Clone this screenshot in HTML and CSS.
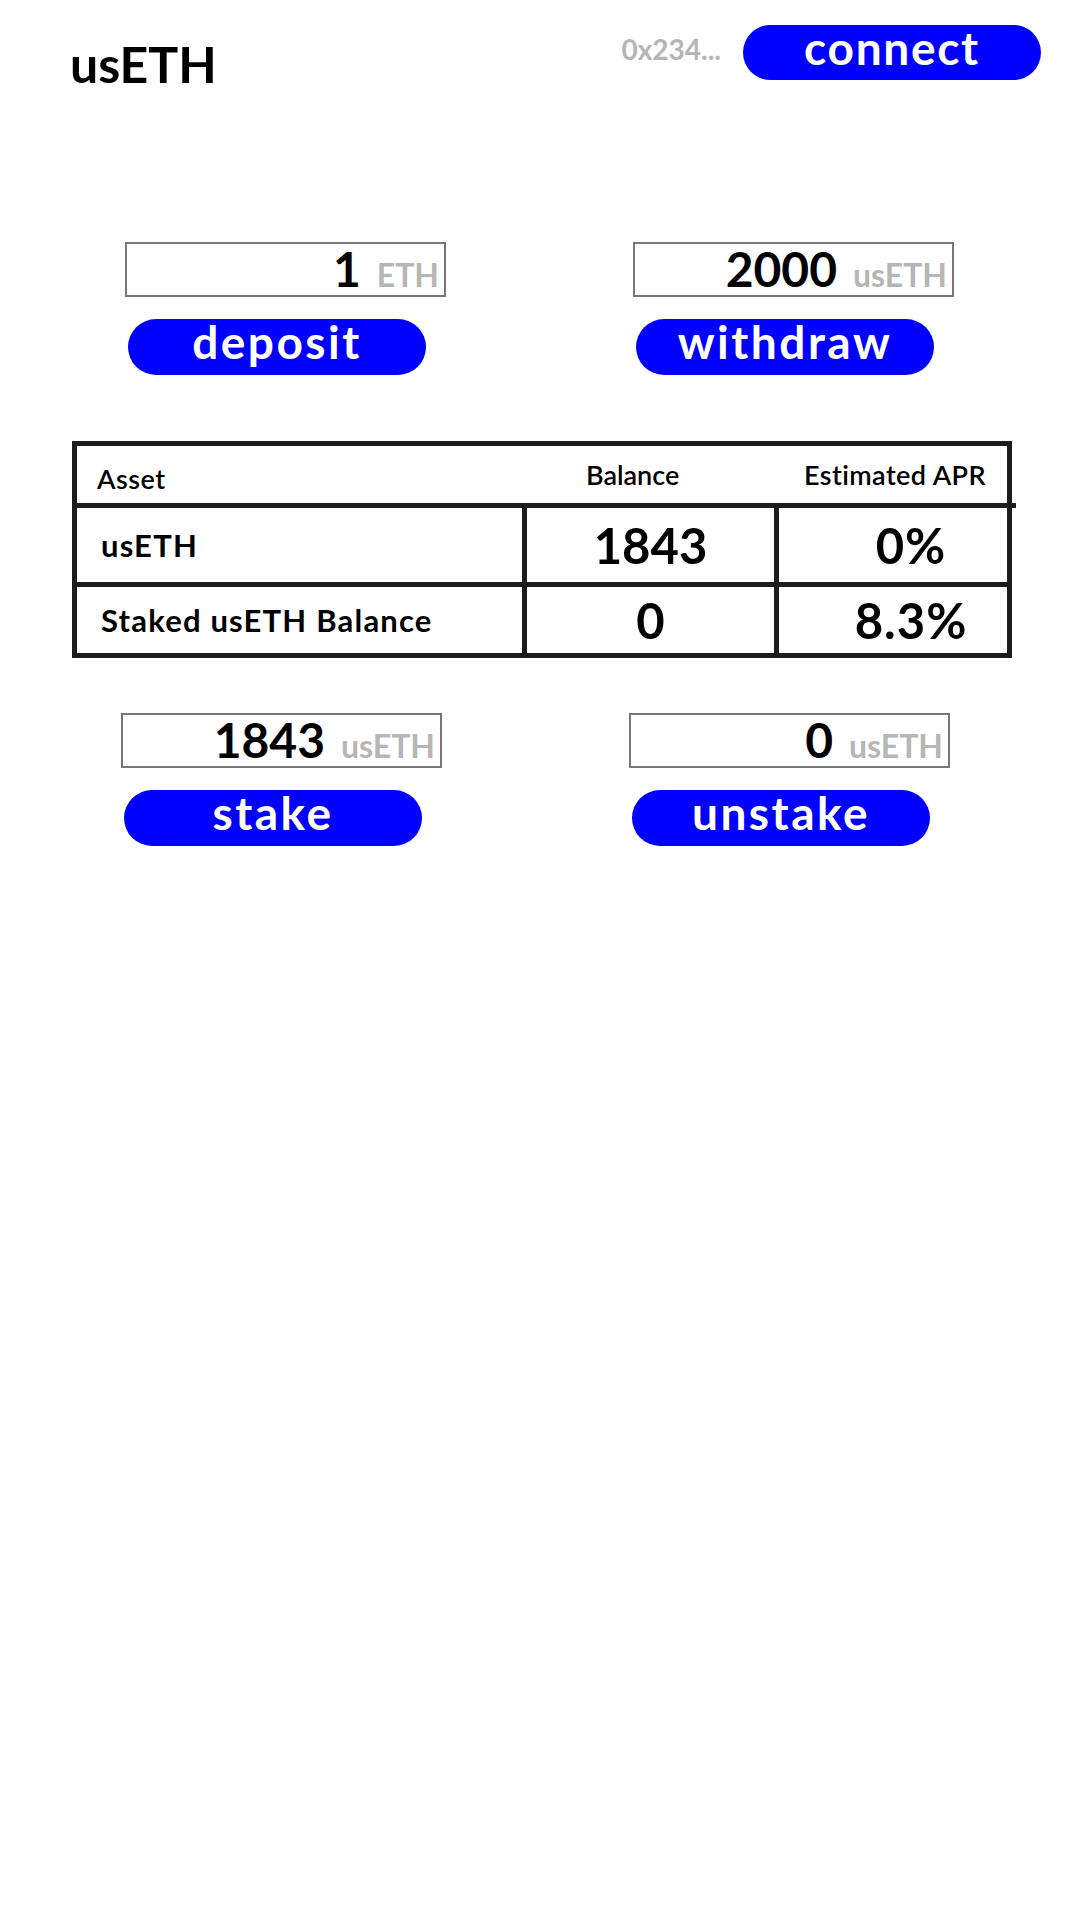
FILE: index.html
```html
<!DOCTYPE html>
<html lang="en">
<head>
    <meta charset="UTF-8">
    <meta name="viewport" content="width=device-width, initial-scale=1.0">
    <title>usETH</title>
    <link rel="stylesheet" href="styles.css">
</head>
<body>
    <div class="app">
        <div class="app-header">
            <h1 class="app-title">usETH</h1>
            <div class="wallet">
                <span class="wallet-address">0x234...</span>
                <button class="connect-button">connect</button>
            </div>
        </div>

        <div class="actions">
            <div class="action">
                <label class="amount">
                    <input type="text" class="amount-input" value="1">
                    <span class="amount-unit">ETH</span>
                </label>
                <button class="action-button">deposit</button>
            </div>
            <div class="action">
                <label class="amount">
                    <input type="text" class="amount-input" value="2000">
                    <span class="amount-unit">usETH</span>
                </label>
                <button class="action-button">withdraw</button>
            </div>
        </div>

        <div class="asset-table">
            <div class="table-head">
                <div class="head-cell head-asset">Asset</div>
                <div class="head-cell head-balance">Balance</div>
                <div class="head-cell head-apr">Estimated APR</div>
            </div>
            <div class="table-row row-main">
                <div class="cell cell-name">usETH</div>
                <div class="cell cell-value">1843</div>
                <div class="cell cell-apr">0%</div>
            </div>
            <div class="table-row row-staked">
                <div class="cell cell-name">Staked usETH Balance</div>
                <div class="cell cell-value">0</div>
                <div class="cell cell-apr">8.3%</div>
            </div>
        </div>

        <div class="actions actions-lower">
            <div class="action">
                <label class="amount">
                    <input type="text" class="amount-input" value="1843">
                    <span class="amount-unit">usETH</span>
                </label>
                <button class="action-button">stake</button>
            </div>
            <div class="action">
                <label class="amount">
                    <input type="text" class="amount-input" value="0">
                    <span class="amount-unit">usETH</span>
                </label>
                <button class="action-button">unstake</button>
            </div>
        </div>
    </div>
</body>
</html>
```

FILE: styles.css
```css
* {
    margin: 0;
    padding: 0;
    box-sizing: border-box;
    font-family: 'Lato', 'Open Sans', sans-serif;
}

body {
    background: #fff;
    color: #000;
    width: 1080px;
    min-height: 1920px;
}

.app-header {
    display: flex;
    justify-content: space-between;
    align-items: flex-start;
    height: 80px;
    padding: 25px 39px 0 70px;
}

.app-title {
    margin-top: 14px;
    font-size: 50px;
    font-weight: 700;
    line-height: 50px;
}

.wallet {
    display: flex;
    align-items: flex-start;
    gap: 22px;
}

.wallet-address {
    margin-top: 10px;
    font-size: 28px;
    font-weight: 700;
    line-height: 28px;
    color: #b5b5b5;
}

.connect-button {
    width: 298px;
    height: 55px;
    padding: 0 0 9px;
    border: none;
    border-radius: 28px;
    background: #0000ff;
    color: #fff;
    font-size: 46px;
    font-weight: 700;
    line-height: 46px;
    letter-spacing: 1.7px;
    cursor: pointer;
}

.actions {
    display: grid;
    grid-template-columns: 321px 321px;
    column-gap: 187px;
    margin-top: 162px;
    padding-left: 125px;
}

.actions-lower {
    margin-top: 55px;
    padding-left: 121px;
}

.action {
    display: flex;
    flex-direction: column;
    gap: 22px;
}

.amount {
    display: flex;
    align-items: baseline;
    height: 55px;
    padding: 0 5px 0 8px;
    border: 2px solid #777;
}

.amount-input {
    flex: 1;
    min-width: 0;
    height: 49px;
    border: none;
    outline: none;
    background: transparent;
    text-align: right;
    font-size: 48px;
    font-weight: 700;
    color: #000;
}

.amount-unit {
    margin-left: 16px;
    font-size: 32px;
    font-weight: 700;
    color: #b6b6b6;
}

.action-button {
    width: 298px;
    height: 56px;
    margin-left: 3px;
    padding: 0 0 11px;
    border: none;
    border-radius: 28px;
    background: #0000ff;
    color: #fff;
    font-size: 46px;
    font-weight: 700;
    line-height: 45px;
    letter-spacing: 2.5px;
    cursor: pointer;
}

.asset-table {
    width: 940px;
    margin: 66px 0 0 72px;
    border: 5px solid #1c1c1c;
}

.table-head,
.table-row {
    display: grid;
    grid-template-columns: 450px 252px 1fr;
}

.table-head {
    height: 62px;
    margin-right: -9px;
    border-bottom: 5px solid #1c1c1c;
}

.head-cell {
    display: flex;
    align-items: center;
    font-size: 27px;
    font-weight: 600;
}

.head-asset {
    padding: 8px 0 0 20px;
    letter-spacing: 0.5px;
}

.head-balance {
    padding-left: 59px;
}

.head-apr {
    padding-left: 25px;
    letter-spacing: 0.4px;
}

.table-row {
    border-bottom: 5px solid #1c1c1c;
}

.row-main {
    height: 79px;
}

.row-staked {
    height: 66px;
    border-bottom: none;
}

.cell {
    display: flex;
    align-items: center;
}

.cell-name {
    padding-left: 24px;
    border-right: 5px solid #1c1c1c;
    font-size: 31px;
    font-weight: 700;
    letter-spacing: 1.2px;
}

.cell-value {
    justify-content: center;
    border-right: 5px solid #1c1c1c;
    font-size: 49px;
    font-weight: 700;
}

.cell-apr {
    justify-content: center;
    padding-left: 36px;
    font-size: 49px;
    font-weight: 700;
    letter-spacing: 1px;
}
```
